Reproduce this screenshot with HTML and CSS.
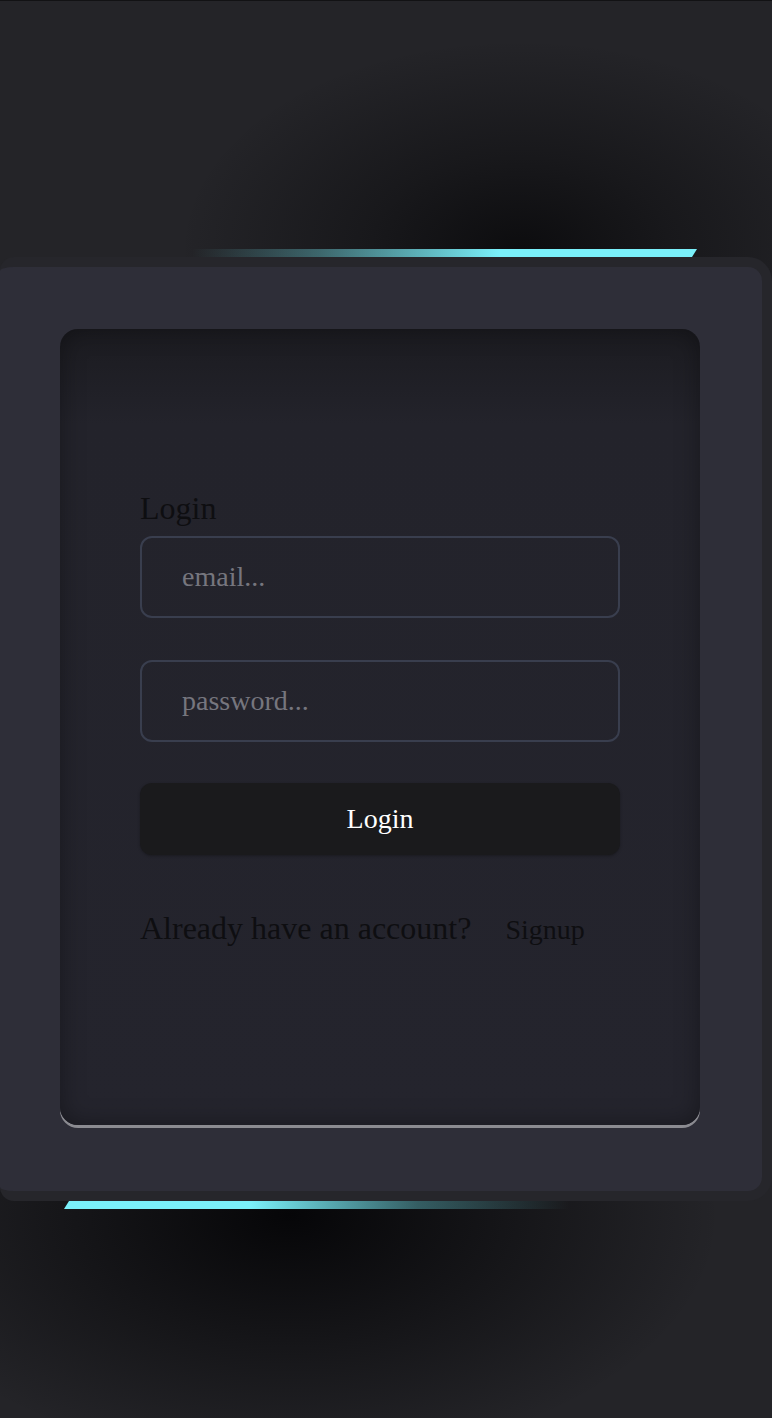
FILE: index.html
```html
<!DOCTYPE html>
<html lang="en">
<head>
    <meta charset="UTF-8">
    <meta name="viewport" content="width=device-width, initial-scale=1.0">
    <title>Login</title>
    <link rel="stylesheet" href="styles.css">
</head>
<body>
    <div class="wrapper">
        <div class="bar bar-top"></div>

        <!-- Card esterna -->
        <div class="card">
            <div class="panel">
                <form class="login-form">
                    <label for="email" class="title">Login</label>
                    <input type="email" id="email" placeholder="email...">
                    <input type="password" id="password" placeholder="password...">
                    <button type="submit">Login</button>
                </form>
                <p class="footer">Already have an account? <a href="#">Signup</a></p>
            </div>
        </div>

        <div class="bar bar-bottom"></div>
    </div>
</body>
</html>
```

FILE: styles.css
```css
html {
    overflow: hidden;
}
body {
    margin: 0;
    height: 1417px;
    border-top: 1px solid #121214;
    font-family: "Liberation Serif", "Times New Roman", serif;
    /* ombre scure sopra e sotto la card */
    background:
        radial-gradient(ellipse 340px 210px at 520px 250px, rgba(10, 10, 12, 0.9) 0%, rgba(10, 10, 12, 0.45) 45%, rgba(10, 10, 12, 0) 100%),
        radial-gradient(ellipse 430px 250px at 290px 1215px, rgba(6, 6, 8, 1) 0%, rgba(6, 6, 8, 0.55) 45%, rgba(6, 6, 8, 0) 100%),
        #242428;
}
.wrapper {
    width: 772px;
    padding-top: 248px;
    display: flex;
    flex-direction: column;
}
.bar {
    width: 505px;
    height: 8px;
}
.bar-top {
    align-self: flex-end;
    margin-right: 75px;
    background: linear-gradient(to right, rgba(122, 240, 250, 0) 0%, rgba(122, 240, 250, 0.35) 25%, #7af0fa 61%, #7af0fa 100%);
    clip-path: polygon(0 0, 100% 0, calc(100% - 5px) 100%, 0 100%);
}
.bar-bottom {
    margin-left: 64px;
    background: linear-gradient(to right, #7af0fa 0%, #7af0fa 37%, rgba(122, 240, 250, 0.35) 70%, rgba(122, 240, 250, 0) 100%);
    clip-path: polygon(5px 0, 100% 0, 100% 100%, 0 100%);
}
.card {
    border: 10px solid #26262b;
    border-left-width: 0;
    border-radius: 14px 24px 24px 14px;
    background: #2e2e38;
    padding: 62px 62px 66px 60px;
}
.panel {
    height: 796px;
    box-sizing: border-box;
    padding: 161px 80px 0;
    border-radius: 18px;
    background: linear-gradient(to bottom, #1b1b20 0%, #23232b 12%, #24242d 100%);
    box-shadow: inset 0 0 24px rgba(0, 0, 0, 0.35), 0 3px 0 #8b8b91;
}
.login-form {
    display: flex;
    flex-direction: column;
}
.title {
    font-size: 32px;
    color: #0e0e11;
    margin-bottom: 9px;
}
input {
    height: 82px;
    box-sizing: border-box;
    margin-bottom: 42px;
    padding: 0 40px;
    border: 2px solid #393e4e;
    border-radius: 12px;
    background: transparent;
    font-family: inherit;
    font-size: 28px;
    color: #ccc;
    outline: none;
}
input::placeholder {
    color: #76767e;
}
#password {
    margin-bottom: 41px;
}
button {
    height: 72px;
    border: none;
    border-radius: 12px;
    background: #1a1a1c;
    color: #fff;
    font-family: inherit;
    font-size: 28px;
    box-shadow: 0 1px 3px rgba(0, 0, 0, 0.3);
}
.footer {
    margin: 55px 0 0;
    font-size: 32px;
    color: #0e0e11;
}
.footer a {
    margin-left: 26px;
    font-size: 28px;
    color: #0e0e11;
    text-decoration: none;
}
```
